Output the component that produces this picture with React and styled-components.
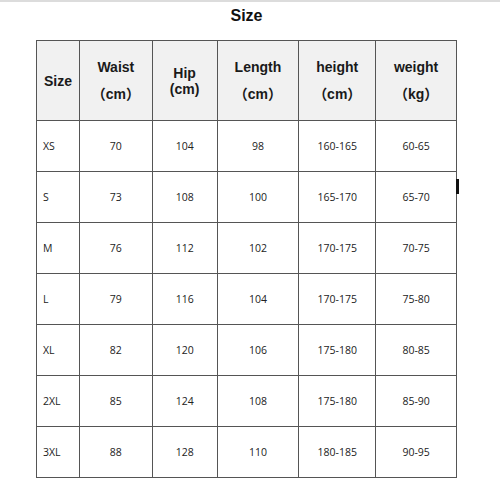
import React from "react";
import styled, { createGlobalStyle } from "styled-components";

const GlobalStyle = createGlobalStyle`
  html, body {
    margin: 0;
    padding: 0;
    background: #ffffff;
  }
  body {
    font-family: "Liberation Sans", Arial, sans-serif;
  }
`;

const Page = styled.div`
  width: 500px;
  height: 500px;
  box-sizing: border-box;
  border-top: 2px solid #dcdcdc;
  padding-left: 36px;
  background: #fff;
`;

const Title = styled.h1`
  margin: 0;
  width: 421px;
  height: 38px;
  display: flex;
  align-items: center;
  justify-content: center;
  padding-bottom: 10px;
  box-sizing: border-box;
  font-family: "Liberation Sans", Arial, sans-serif;
  font-size: 16px;
  font-weight: 700;
  color: #111;
`;

const TableWrap = styled.div`
  position: relative;
  width: 421px;
`;

const Table = styled.table`
  border-collapse: collapse;
  table-layout: fixed;
`;

const HeadRow = styled.tr`
  height: 80px;
  background: #f1f1f1;
`;

const BodyRow = styled.tr`
  height: 51px;
`;

const Th = styled.th`
  border: 1.5px solid #555;
  padding: 0;
  width: ${({ $w }) => $w}px;
  font-family: "Liberation Sans", Arial, "Noto Sans CJK SC", sans-serif;
  font-size: 14px;
  font-weight: 700;
  color: #1a1a1a;
`;

const HeadStack = styled.div`
  display: flex;
  flex-direction: column;
  align-items: center;
  gap: ${({ $gap }) => $gap}px;
  line-height: 16px;
`;

const Unit = styled.span`
  font-family: "Liberation Sans", "Noto Sans CJK SC", sans-serif;
`;

const Td = styled.td`
  border: 1.5px solid #555;
  padding: 0 0 0 ${({ $left }) => ($left ? 6 : 0)}px;
  text-align: ${({ $left }) => ($left ? "left" : "center")};
  font-family: "Open Sans", "Noto Sans", sans-serif;
  font-size: 10.5px;
  color: #222;
`;

const EdgeMark = styled.div`
  position: absolute;
  left: 420px;
  top: 139px;
  width: 3px;
  height: 15px;
  background: #111;
`;

const columns = [
  { w: 42, label: "Size" },
  { w: 72, label: "Waist", unit: "（cm）", gap: 11 },
  { w: 64, label: "Hip", unit: "(cm)", gap: 0 },
  { w: 81, label: "Length", unit: "（cm）", gap: 11 },
  { w: 76, label: "height", unit: "（cm）", gap: 11 },
  { w: 80, label: "weight", unit: "（kg）", gap: 11 },
];

const rows = [
  ["XS", "70", "104", "98", "160-165", "60-65"],
  ["S", "73", "108", "100", "165-170", "65-70"],
  ["M", "76", "112", "102", "170-175", "70-75"],
  ["L", "79", "116", "104", "170-175", "75-80"],
  ["XL", "82", "120", "106", "175-180", "80-85"],
  ["2XL", "85", "124", "108", "175-180", "85-90"],
  ["3XL", "88", "128", "110", "180-185", "90-95"],
];

export default function App() {
  return (
    <>
      <GlobalStyle />
      <Page>
        <Title>Size</Title>
        <TableWrap>
          <Table>
            <thead>
              <HeadRow>
                {columns.map((c) => (
                  <Th key={c.label} $w={c.w}>
                    {c.unit ? (
                      <HeadStack $gap={c.gap}>
                        <span>{c.label}</span>
                        <Unit>{c.unit}</Unit>
                      </HeadStack>
                    ) : (
                      c.label
                    )}
                  </Th>
                ))}
              </HeadRow>
            </thead>
            <tbody>
              {rows.map((r) => (
                <BodyRow key={r[0]}>
                  {r.map((v, i) => (
                    <Td key={i} $left={i === 0}>
                      {v}
                    </Td>
                  ))}
                </BodyRow>
              ))}
            </tbody>
          </Table>
          <EdgeMark />
        </TableWrap>
      </Page>
    </>
  );
}
